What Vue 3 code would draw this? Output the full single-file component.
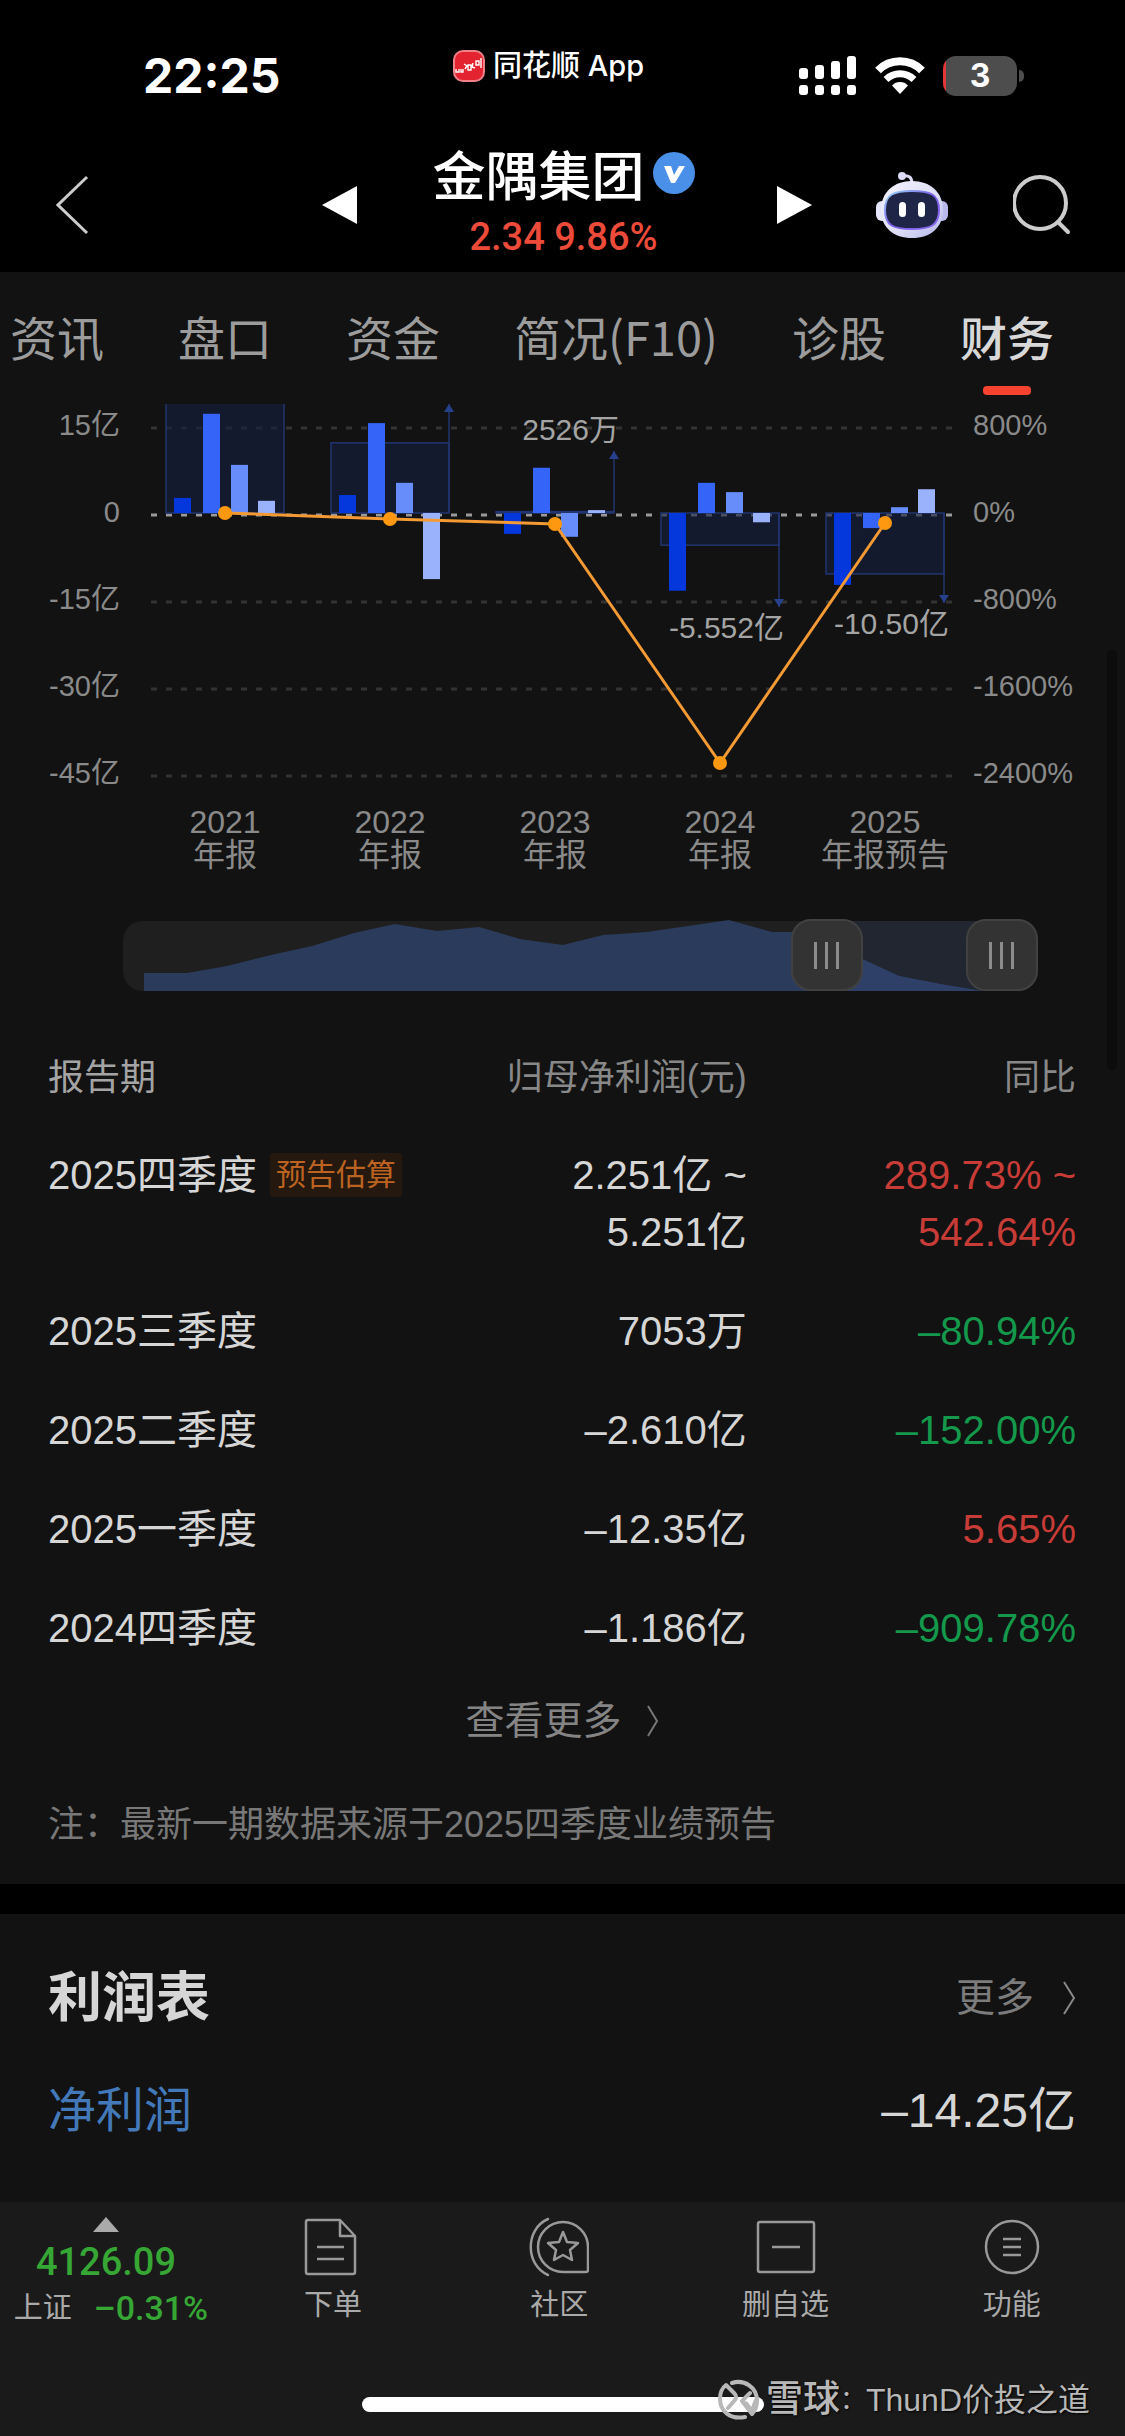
<template>
  <div class="page">
    <header class="top">
      <div class="status-bar">
        <span class="time">22:25</span>
        <span class="source">
          <svg width="32" height="32" viewBox="0 0 32 32" aria-hidden="true">
            <rect x="1" y="1" width="30" height="30" rx="9" fill="#e32430" stroke="#f0808a" stroke-width="2" />
            <path d="M3 19v3h3v-3M8 19v3h2v-3M11 14l3 2-2 3M15 15v5h3v-5zM20 13l-1 4 3 1M23 11v4h3v-4zM28 8v10" fill="none" stroke="#fff" stroke-width="1.4" />
          </svg>
          同花顺 App
        </span>
        <span class="signals">
          <svg width="58" height="40" viewBox="0 0 58 40" fill="#fff" aria-hidden="true">
            <rect x="0" y="12" width="9" height="11" rx="3" />
            <rect x="16" y="9" width="9" height="14" rx="3" />
            <rect x="32" y="5" width="9" height="18" rx="3" />
            <rect x="48" y="0" width="9" height="23" rx="3" />
            <rect v-for="x in [0, 16, 32, 48]" :key="x" :x="x" y="29" width="9" height="10" rx="3" />
          </svg>
          <svg width="50" height="38" viewBox="0 0 50 38" aria-hidden="true">
            <path d="M3 13.500a31 31 0 0 1 44 0" fill="none" stroke="#fff" stroke-width="8" />
            <path d="M11 22.500a20 20 0 0 1 28 0" fill="none" stroke="#fff" stroke-width="7" />
            <path d="M25 37l-8-8.500a11 11 0 0 1 16 0z" fill="#fff" />
          </svg>
          <span class="battery">3</span>
        </span>
      </div>

      <div class="nav-bar">
        <div class="nav-side">
          <button class="icon-btn" aria-label="返回">
            <svg width="34" height="60" viewBox="0 0 34 60">
              <path d="M31 2L2 30l29 28" fill="none" stroke="#ccc" stroke-width="3" />
            </svg>
          </button>
          <button class="icon-btn" aria-label="上一只">
            <svg width="35" height="38" viewBox="0 0 35 38"><path d="M35 0v38L0 19z" fill="#fff" /></svg>
          </button>
        </div>
        <div class="stock">
          <h1>
            金隅集团
            <svg width="42" height="42" viewBox="0 0 42 42" aria-hidden="true">
              <circle cx="21" cy="21" r="21" fill="#4a90e8" />
              <path d="M11 14h7l3 9 5-9h6L22 31h-4z" fill="#fff" />
            </svg>
          </h1>
          <p>2.34 9.86%</p>
        </div>
        <div class="nav-side">
          <button class="icon-btn" aria-label="下一只">
            <svg width="35" height="38" viewBox="0 0 35 38"><path d="M0 0v38l35-19z" fill="#fff" /></svg>
          </button>
          <button class="icon-btn" aria-label="助手">
            <svg width="72" height="68" viewBox="0 0 72 68">
              <defs>
                <linearGradient id="head" x1="0" y1="0" x2="1" y2="1">
                  <stop offset="0" stop-color="#f4f4fd" />
                  <stop offset="0.600" stop-color="#dcdcf6" />
                  <stop offset="1" stop-color="#b3b4ea" />
                </linearGradient>
                <linearGradient id="rim" x1="0" y1="0" x2="1" y2="1">
                  <stop offset="0" stop-color="#9adcf5" />
                  <stop offset="0.500" stop-color="#7a5be8" />
                  <stop offset="1" stop-color="#8a6cf0" />
                </linearGradient>
              </defs>
              <path d="M26 5c7-1 10 1 10 8" fill="none" stroke="#dcdcf6" stroke-width="3" />
              <circle cx="26" cy="5" r="4" fill="#dcdcf6" />
              <rect x="0" y="30" width="14" height="20" rx="6" fill="#e6e6fa" />
              <rect x="58" y="30" width="14" height="20" rx="6" fill="#b9b9ec" />
              <path d="M36 10c18 0 31 11 31 29S54 67 36 67 5 57 5 39s13-29 31-29z" fill="url(#head)" />
              <path d="M36 20c18 0 27 3 27 19s-9 19-27 19S9 55 9 39s9-19 27-19z" fill="#1f2547" stroke="url(#rim)" stroke-width="2" />
              <rect x="23" y="31" width="7" height="15" rx="3.500" fill="#fff" />
              <rect x="42" y="31" width="7" height="15" rx="3.500" fill="#fff" />
            </svg>
          </button>
          <button class="icon-btn" aria-label="搜索">
            <svg width="64" height="60" viewBox="0 0 64 60">
              <circle cx="27" cy="28" r="26" fill="none" stroke="#ccc" stroke-width="4" />
              <path d="M45 47l10 10" stroke="#ccc" stroke-width="4" stroke-linecap="round" />
            </svg>
          </button>
        </div>
      </div>
    </header>

    <nav class="tabs">
      <a v-for="tab in tabs" :key="tab" href="#" :class="{ active: tab === '财务' }">{{ tab }}</a>
    </nav>

    <main>
      <section class="panel">
        <svg class="chart" viewBox="0 0 1125 480" role="img" aria-label="归母净利润">
          <g stroke-width="3" stroke-dasharray="6 9">
            <line
              v-for="(tick, i) in ticks"
              :key="tick.left"
              x1="151"
              x2="954"
              :y1="24 + i * 87"
              :y2="24 + i * 87"
              :stroke="i === 1 ? '#999' : '#333'"
            />
          </g>

          <g v-for="(item, i) in years" :key="item.year">
            <rect
              :x="center(i) - 59"
              :y="top(item.total)"
              width="118"
              :height="size(item.total)"
              fill="#15203f"
              fill-opacity="0.600"
              stroke="#22356f"
              stroke-width="1.500"
            />
            <rect
              v-for="(value, q) in item.quarters"
              :key="q"
              :x="center(i) + barOffsets[q]"
              :y="top(value)"
              width="17"
              :height="size(value)"
              :fill="barColors[q]"
            />
            <template v-if="item.arrow !== undefined">
              <line :x1="center(i) + 59" :x2="center(i) + 59" :y1="zero" :y2="item.arrow" stroke="#22356f" stroke-width="1.500" />
              <path :d="arrowHead(i, item)" fill="#26408c" />
            </template>
            <text v-if="item.label" class="value" :x="center(i) + 64" :y="item.labelY" text-anchor="end">{{ item.label }}</text>
            <text class="axis-x" :x="center(i)" y="429" text-anchor="middle">{{ item.year }}</text>
            <text class="axis-x" :x="center(i)" y="462" text-anchor="middle">{{ item.name }}</text>
          </g>

          <polyline :points="linePoints" fill="none" stroke="#f39a35" stroke-width="3" />
          <circle v-for="(item, i) in years" :key="item.rate" :cx="center(i)" :cy="rateY(item.rate)" r="7" fill="#ff9811" />

          <g v-for="(tick, i) in ticks" :key="tick.right" class="axis-y">
            <text x="120" :y="31 + i * 87" text-anchor="end">{{ tick.left }}</text>
            <text x="973" :y="31 + i * 87">{{ tick.right }}</text>
          </g>
        </svg>

        <div class="range">
          <svg viewBox="0 0 915 72" preserveAspectRatio="none" aria-hidden="true">
            <rect y="2" width="915" height="70" rx="20" fill="#1f1f1f" />
            <rect x="704" y="2" width="175" height="70" fill="#222630" />
            <path :d="trend" fill="#2b3b5c" />
            <path d="M704 72V30l35 10 37 17 41 8 42 7z" fill="#2e4068" />
          </svg>
          <input v-model="start" type="range" min="0" max="1000" aria-label="开始" />
          <input v-model="end" type="range" min="0" max="1000" aria-label="结束" />
        </div>

        <table>
          <thead>
            <tr>
              <th>报告期</th>
              <th>归母净利润(元)</th>
              <th>同比</th>
            </tr>
          </thead>
          <tbody>
            <tr v-for="row in rows" :key="row.period">
              <td>{{ row.period }}<span v-if="row.tag" class="tag">{{ row.tag }}</span></td>
              <td><div v-for="line in row.profit" :key="line">{{ line }}</div></td>
              <td :class="row.up ? 'up' : 'down'"><div v-for="line in row.yoy" :key="line">{{ line }}</div></td>
            </tr>
          </tbody>
        </table>

        <a class="see-more" href="#">
          查看更多
          <svg width="14" height="34" viewBox="0 0 14 34"><path d="M2 2l9 15-9 15" fill="none" stroke="#777" stroke-width="2" /></svg>
        </a>
        <p class="note">注：最新一期数据来源于2025四季度业绩预告</p>
      </section>

      <section class="panel income">
        <div class="income-head">
          <h2>利润表</h2>
          <a href="#">
            更多
            <svg width="14" height="34" viewBox="0 0 14 34"><path d="M2 1l10 16L2 33" fill="none" stroke="#888" stroke-width="2" /></svg>
          </a>
        </div>
        <div class="income-row">
          <a href="#">净利润</a>
          <span>–14.25亿</span>
        </div>
      </section>
      <div class="scroll-thumb"></div>
    </main>

    <footer class="bottom">
      <div class="toolbar">
        <button class="index">
          <svg width="26" height="15" viewBox="0 0 26 15" aria-hidden="true"><path d="M13 0l13 15H0z" fill="#aaa" /></svg>
          <strong>4126.09</strong>
          <span class="index-row">上证 <b>–0.31%</b></span>
        </button>
        <button>
          <svg width="60" height="60" viewBox="0 0 60 60" fill="none" stroke="#999" stroke-width="2.500" stroke-linejoin="round">
            <path d="M5 3h32l15 16v36q0 2-2 2H5q-2 0-2-2V5q0-2 2-2zM37 3v16h15" />
            <path d="M14 30h27M14 42h27" />
          </svg>
          下单
        </button>
        <button>
          <svg width="60" height="60" viewBox="0 0 60 60" fill="none" stroke="#999" stroke-width="2.500" stroke-linejoin="round" stroke-linecap="round">
            <path d="M34 5a25 25 0 0 1 25 25v23q0 2-2 2H34a25 25 0 0 1 0-50z" />
            <path d="M19 2C-4 12-4 48 19 58" />
            <path d="M34 15l4 10 11 1-8 7 2 10-9-5-9 5 2-10-8-7 11-1z" />
          </svg>
          社区
        </button>
        <button>
          <svg width="60" height="60" viewBox="0 0 60 60" fill="none" stroke="#999" stroke-width="2.500">
            <rect x="2" y="5" width="56" height="50" rx="2" />
            <path d="M16 30h28" />
          </svg>
          删自选
        </button>
        <button>
          <svg width="60" height="60" viewBox="0 0 60 60" fill="none" stroke="#999" stroke-width="2.500">
            <circle cx="30" cy="30" r="26" />
            <path d="M21 22h18M21 30h18M21 38h18" />
          </svg>
          功能
        </button>
      </div>
      <div class="home-indicator"></div>
      <div class="watermark">
        <svg width="42" height="42" viewBox="0 0 42 42" fill="none" stroke="#b8b8b8" stroke-width="4" stroke-linecap="round" stroke-linejoin="round" aria-hidden="true">
          <path d="M14 4C26 0 39 8 39 22c0 6-2 10-5 13L24 22l8-8" />
          <path d="M27 38C12 41 2 32 2 20 2 14 4 9 8 6l8 8c3 3 3 5 0 8l-6 7" />
          <path d="M38 22l-4 11-6-8" stroke-width="5" />
        </svg>
        <b>雪球</b><span class="colon">：</span><span>ThunD价投之道</span>
      </div>
    </footer>
  </div>
</template>

<script setup>
import { computed, ref } from 'vue'

const tabs = ['资讯', '盘口', '资金', '简况(F10)', '诊股', '财务']

const ticks = [
  { left: '15亿', right: '800%' },
  { left: '0', right: '0%' },
  { left: '-15亿', right: '-800%' },
  { left: '-30亿', right: '-1600%' },
  { left: '-45亿', right: '-2400%' }
]

const years = [
  { year: '2021', name: '年报', total: 29.3, rate: 0, quarters: [2.6, 17.1, 8.3, 2.1] },
  { year: '2022', name: '年报', total: 12.1, rate: -55, quarters: [3.1, 15.5, 5.2, -11.4], arrow: 0 },
  { year: '2023', name: '年报', total: 0.25, rate: -101, quarters: [-3.6, 7.8, -4.1, 0.5], arrow: 47, label: '2526万', labelY: 36 },
  { year: '2024', name: '年报', total: -5.55, rate: -2299, quarters: [-13.4, 5.2, 3.6, -1.6], arrow: 203, label: '-5.552亿', labelY: 234 },
  { year: '2025', name: '年报预告', total: -10.5, rate: -92, quarters: [-12.4, -2.6, 1, 4.1], arrow: 199, label: '-10.50亿', labelY: 230 }
]

const barOffsets = [-51, -22, 6, 33]
const barColors = ['#0437dc', '#3464f8', '#668dfa', '#9ab2fb']

const zero = 109
const unit = 5.8
const center = (i) => 225 + i * 165
const top = (value) => (value > 0 ? zero - value * unit : zero)
const size = (value) => Math.abs(value) * unit
const rateY = (rate) => zero - rate * 0.10875

const arrowHead = (i, item) => {
  const x = center(i) + 59
  const dir = item.total > 0 ? -1 : 1
  return `M${x - 5} ${item.arrow - dir * 8}h10l-5 ${dir * 8}z`
}

const linePoints = computed(() => years.map((item, i) => `${center(i)},${rateY(item.rate)}`).join(' '))

const trendPoints = [
  [21, 54], [64, 54], [104, 47], [148, 36], [189, 27], [231, 14], [272, 5], [314, 12], [356, 8], [397, 20],
  [440, 26], [480, 16], [524, 13], [565, 7], [606, 1], [649, 13], [690, 13], [739, 40], [776, 57], [817, 65], [859, 72]
]
const trend = `M21 72L${trendPoints.map((p) => p.join(' ')).join('L')}z`

const start = ref(792)
const end = ref(1000)

const rows = [
  { period: '2025四季度', tag: '预告估算', profit: ['2.251亿 ~', '5.251亿'], yoy: ['289.73% ~', '542.64%'], up: true },
  { period: '2025三季度', profit: ['7053万'], yoy: ['–80.94%'] },
  { period: '2025二季度', profit: ['–2.610亿'], yoy: ['–152.00%'] },
  { period: '2025一季度', profit: ['–12.35亿'], yoy: ['5.65%'], up: true },
  { period: '2024四季度', profit: ['–1.186亿'], yoy: ['–909.78%'] }
]
</script>

<style>
body {
  background: #121212;
}
</style>

<style scoped>
.page {
  display: flex;
  flex-direction: column;
  min-height: 100vh;
  color: #d6d6d6;
  background: #121212;
  font-family: "Liberation Sans", "Noto Sans CJK SC", sans-serif;
}
h1, h2, p {
  margin: 0;
}
a {
  color: inherit;
  text-decoration: none;
}
button {
  padding: 0;
  border: 0;
  background: none;
  color: inherit;
  font: inherit;
}
svg {
  display: block;
  flex-shrink: 0;
}
.top {
  background: #000;
  color: #fff;
  padding-bottom: 3px;
}
.status-bar {
  display: grid;
  grid-template-columns: 44% 1fr auto;
  align-items: start;
  padding: 46px 100px 35px 0;
}
.time {
  padding-left: 143px;
  font: 700 48px/60px Inter, sans-serif;
}
.source {
  display: flex;
  align-items: center;
  gap: 8px;
  padding-left: 2px;
  font: 500 29px/40px Inter, "Noto Sans CJK SC", sans-serif;
}
.signals {
  display: flex;
  align-items: center;
  gap: 18px;
  height: 60px;
}
.battery {
  position: relative;
  width: 74px;
  margin-right: 8px;
  border-radius: 13px;
  background: linear-gradient(90deg, #e0383a 3px, #4d4d4d 3px);
  font: 700 32px/40px Inter, sans-serif;
  text-align: center;
}
.battery::after {
  content: "";
  position: absolute;
  top: 14px;
  right: -7px;
  width: 5px;
  height: 12px;
  border-radius: 0 5px 5px 0;
  background: #4d4d4d;
}
.nav-bar {
  display: grid;
  grid-template-columns: 1fr 420px 1fr;
  padding: 0 48px 0 56px;
}
.nav-side {
  display: flex;
  align-items: center;
  justify-content: space-between;
}
.stock {
  padding-right: 6px;
  text-align: center;
}
.stock h1 {
  display: flex;
  align-items: center;
  justify-content: center;
  gap: 8px;
  font-family: "Noto Sans CJK SC", sans-serif;
  font-size: 53px;
  font-weight: 500;
  line-height: 64px;
}
.stock p {
  color: #ec4b3a;
  font: 500 38px/64px Roboto, sans-serif;
}
.tabs {
  display: flex;
  gap: 74px;
  height: 100px;
  padding: 32px 0 0 10px;
  overflow: hidden;
  color: #9c9c9c;
  font-family: "Noto Sans CJK SC", sans-serif;
  font-size: 47px;
  line-height: 64px;
  white-space: nowrap;
}
.tabs .active {
  color: #d8d8d8;
  font-weight: 500;
}
.tabs .active::after {
  content: "";
  display: block;
  width: 48px;
  height: 9px;
  margin: 18px auto 0;
  border-radius: 4px;
  background: #f5432f;
}
main {
  position: relative;
  display: flex;
  flex: 1;
  flex-direction: column;
  background: #000;
}
.panel {
  background: #121212;
}
.chart {
  width: 100%;
}
.chart text {
  fill: #8a8a8a;
}
.chart .axis-y {
  font-size: 29px;
}
.chart .axis-x {
  font-size: 32px;
}
.chart .value {
  fill: #a4a4a4;
  font-size: 30px;
}
.range {
  display: grid;
  height: 72px;
  margin: 35px 87px 38px 123px;
}
.range > * {
  grid-area: 1 / 1;
  width: 100%;
  height: 72px;
  margin: 0;
}
.range input {
  appearance: none;
  background: none;
  pointer-events: none;
}
.range input::-webkit-slider-thumb {
  appearance: none;
  width: 72px;
  height: 72px;
  border: 2px solid #414141;
  border-radius: 20px;
  background:
    linear-gradient(#8c8c8c, #8c8c8c) 21px 21px / 3px 27px no-repeat,
    linear-gradient(#8c8c8c, #8c8c8c) 32px 21px / 3px 27px no-repeat,
    linear-gradient(#8c8c8c, #8c8c8c) 43px 21px / 3px 27px no-repeat,
    #333;
  box-sizing: border-box;
  pointer-events: auto;
}
table {
  width: 100%;
  border-collapse: collapse;
  table-layout: fixed;
  font-size: 40px;
  line-height: 57px;
}
th,
td {
  box-sizing: border-box;
  padding: 21px 7px 21px 0;
  text-align: right;
  vertical-align: top;
}
th {
  height: 97px;
  padding-top: 0;
  padding-bottom: 0;
  color: #888;
  font-size: 36px;
  font-weight: 400;
  vertical-align: middle;
}
th:first-child {
  color: #a4a4a4;
}
th:first-child,
td:first-child {
  width: 40%;
  padding-left: 48px;
  text-align: left;
}
th:last-child,
td:last-child {
  width: 33%;
  padding-right: 49px;
}
.tag {
  display: inline-block;
  margin-left: 13px;
  padding: 0 6px;
  border-radius: 3px;
  background: #24180f;
  color: #bd6322;
  font-size: 30px;
  line-height: 44px;
  vertical-align: 4px;
}
.up {
  color: #c83c38;
}
.down {
  color: #14984b;
}
.see-more {
  display: flex;
  align-items: center;
  justify-content: center;
  gap: 24px;
  padding: 14px 0;
  color: #848484;
  font-size: 39px;
  line-height: 57px;
}
.note {
  padding: 35px 48px 32px;
  color: #787878;
  font-size: 36px;
  line-height: 54px;
}
.income {
  flex: 1;
  margin-top: 30px;
  padding: 48px 49px 46px 48px;
}
.income-head,
.income-row {
  display: flex;
  align-items: center;
  justify-content: space-between;
}
.income-head {
  line-height: 72px;
}
.income-head h2 {
  font-size: 54px;
  font-weight: 700;
}
.income-head a {
  display: flex;
  align-items: center;
  gap: 28px;
  color: #7c7c7c;
  font-size: 39px;
}
.income-row {
  margin-top: 41px;
  font-size: 48px;
  line-height: 72px;
}
.income-row a {
  color: #4379b9;
}
.scroll-thumb {
  position: absolute;
  top: 246px;
  right: 8px;
  width: 10px;
  height: 420px;
  border-radius: 5px;
  background: #0c0c0c;
}
.bottom {
  position: relative;
  padding-bottom: 24px;
  background: #1a1a1a;
}
.toolbar {
  display: grid;
  grid-template-columns: 220px repeat(4, 1fr);
  padding-top: 15px;
}
.toolbar button {
  display: flex;
  flex-direction: column;
  align-items: center;
  gap: 8px;
  color: #aaa;
  font-size: 29px;
  line-height: 40px;
}
.toolbar .index {
  gap: 0;
  padding-right: 8px;
}
.index strong {
  margin-top: 8px;
  color: #36a635;
  font: 500 38px/44px Roboto, sans-serif;
}
.index-row {
  display: flex;
  gap: 22px;
  padding-left: 10px;
  line-height: 48px;
}
.index b {
  color: #36a635;
  font: 500 34px/48px Roboto, sans-serif;
}
.home-indicator {
  width: 402px;
  height: 15px;
  margin: 65px auto 0;
  border-radius: 8px;
  background: #fff;
}
.watermark {
  position: absolute;
  right: 35px;
  bottom: 12px;
  display: flex;
  align-items: center;
  color: #b8b8b8;
  font-size: 32px;
  line-height: 48px;
  text-shadow: 1px 1px 2px #000;
}
.watermark b {
  margin-left: 6px;
  font-size: 37px;
  font-weight: 500;
}
.watermark .colon {
  font-size: 26px;
}
</style>
